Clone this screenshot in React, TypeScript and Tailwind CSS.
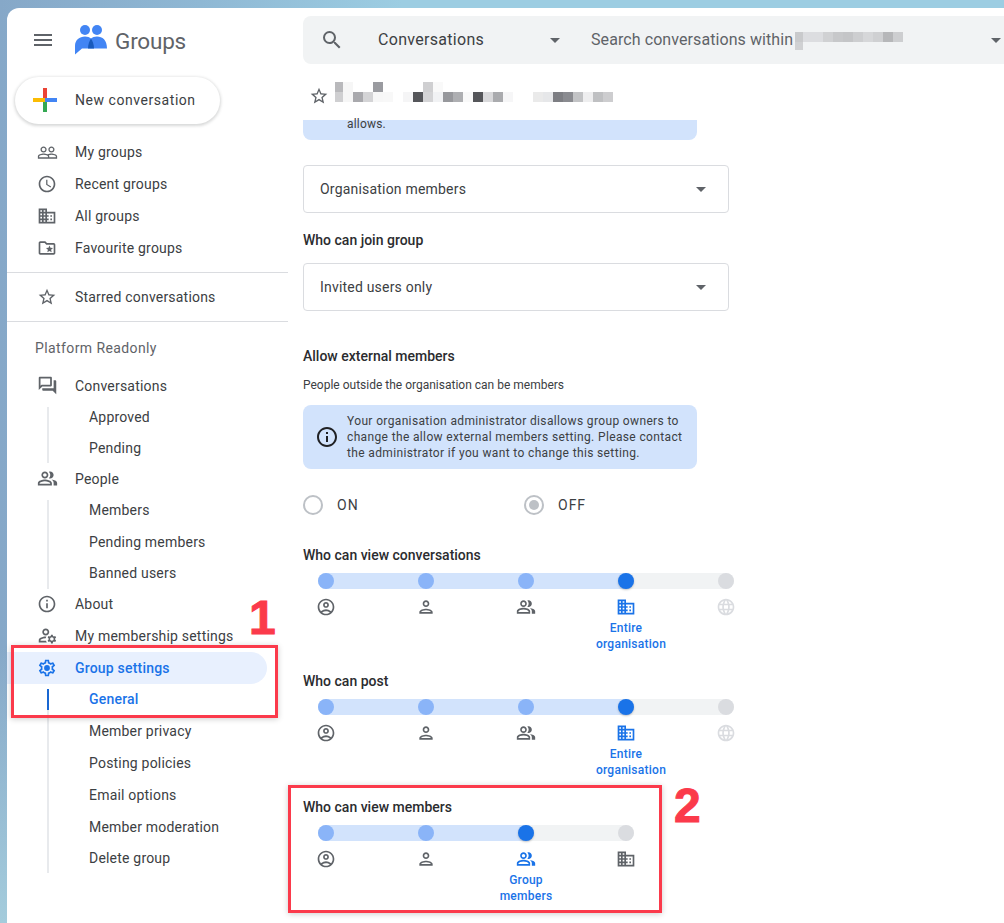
import type { ReactNode } from "react";
import {
  MdAccessTime,
  MdArrowDropDown,
  MdDomain,
  MdInfoOutline,
  MdLanguage,
  MdMenu,
  MdOutlineAccountCircle,
  MdOutlineFolderSpecial,
  MdOutlineForum,
  MdOutlineManageAccounts,
  MdOutlinePeopleAlt,
  MdOutlinePerson,
  MdPeopleOutline,
  MdSearch,
  MdStarBorder,
} from "react-icons/md";

const titleMosaic = [
  [335, 82, 8, "#b9b9bc"], [343, 82, 10, "#f6f6f6"], [373, 82, 10, "#9a9ba0"], [423, 82, 10, "#cfcfd1"], [433, 82, 10, "#f9f9f9"],
  [335, 92, 8, "#cfcfd1"], [343, 92, 10, "#f6f6f6"], [353, 92, 10, "#a9a9ad"], [363, 92, 10, "#d4d4d6"], [373, 92, 10, "#f7f7f7"], [383, 92, 10, "#f8f8f8"],
  [403, 92, 10, "#f5f5f6"], [413, 92, 10, "#55565a"], [423, 92, 10, "#d4d4d6"], [433, 92, 10, "#f1f2f4"], [443, 92, 10, "#97989c"], [453, 92, 10, "#aeafb2"], [463, 92, 10, "#f9f9f9"],
  [473, 92, 10, "#55565a"], [483, 92, 10, "#d9d9db"], [493, 92, 10, "#aaabae"], [503, 92, 10, "#f6f6f7"],
  [533, 92, 10, "#eaeaea"], [543, 92, 10, "#e6e7e9"], [553, 92, 10, "#7d7e83"], [563, 92, 10, "#8a8b90"], [573, 92, 10, "#c2c3c5"], [583, 92, 10, "#eeeeef"], [593, 92, 10, "#bfc0c2"], [603, 92, 10, "#cdcdcf"],
] as const;

const searchMosaic = [
  [795, 32, 8, "#c9cacc"], [803, 32, 10, "#dcdde0"], [813, 32, 10, "#dcdde0"], [823, 32, 10, "#d0d1d3"], [833, 32, 10, "#c7c8ca"], [843, 32, 10, "#c4c5c7"],
  [853, 32, 10, "#cdced0"], [863, 32, 10, "#d6d7d9"], [873, 32, 10, "#cfd0d2"], [883, 32, 10, "#b6b7b9"], [893, 32, 10, "#cdced0"],
  [795, 42, 8, "#d0d1d3"],
] as const;

function GroupsLogo() {
  return (
    <svg width="32" height="30" viewBox="75 26 32 30" className="shrink-0">
      <circle cx="85" cy="31" r="5" fill="#4285f4" />
      <circle cx="97" cy="31" r="5" fill="#4285f4" />
      <path d="M75 55.5V47C75 41 79.5 37.5 85 37.5C87.5 37.5 89.8 38.4 91 39.6C92.2 38.4 94.5 37.5 97 37.5C102.5 37.5 107 41 107 49.5H82Z" fill="#4285f4" />
      <path d="M88 49.5C88 45.5 89.5 42 91 39.6C92.5 42 94 45.5 94 49.5Z" fill="#185abc" />
    </svg>
  );
}

function ColorPlus() {
  return (
    <svg width="24" height="24" viewBox="0 0 24 24" className="shrink-0">
      <rect x="10" y="0" width="4" height="12" fill="#ea4335" />
      <rect x="10" y="12" width="4" height="12" fill="#34a853" />
      <rect x="0" y="10" width="12" height="4" fill="#fbbc04" />
      <rect x="12" y="10" width="12" height="4" fill="#4285f4" />
    </svg>
  );
}

function GearDot() {
  return (
    <svg width="20" height="20" viewBox="0 0 24 24" fill="#1a73e8">
      <path d="M19.43 12.98c.04-.32.07-.64.07-.98 0-.34-.03-.66-.07-.98l2.11-1.65c.19-.15.24-.42.12-.64l-2-3.46c-.09-.16-.26-.25-.44-.25-.06 0-.12.01-.17.03l-2.49 1c-.52-.4-1.08-.73-1.69-.98l-.38-2.65C14.46 2.18 14.25 2 14 2h-4c-.25 0-.46.18-.49.42l-.38 2.65c-.61.25-1.17.59-1.69.98l-2.49-1c-.06-.02-.12-.03-.18-.03-.17 0-.34.09-.43.25l-2 3.46c-.13.22-.07.49.12.64l2.11 1.65c-.04.32-.07.65-.07.98 0 .33.03.66.07.98l-2.11 1.65c-.19.15-.24.42-.12.64l2 3.46c.09.16.26.25.44.25.06 0 .12-.01.17-.03l2.49-1c.52.4 1.08.73 1.69.98l.38 2.65c.03.24.24.42.49.42h4c.25 0 .46-.18.49-.42l.38-2.65c.61-.25 1.17-.59 1.69-.98l2.49 1c.06.02.12.03.18.03.17 0 .34-.09.43-.25l2-3.46c.12-.22.07-.49-.12-.64l-2.11-1.65zm-1.98-1.71c.04.31.05.52.05.73 0 .21-.02.43-.05.73l-.14 1.13.89.7 1.08.84-.7 1.21-1.27-.51-1.04-.42-.9.68c-.43.32-.84.56-1.25.73l-1.06.43-.16 1.13-.2 1.35h-1.4l-.19-1.35-.16-1.13-1.06-.43c-.43-.18-.83-.41-1.23-.71l-.91-.7-1.06.43-1.27.51-.7-1.21 1.08-.84.89-.7-.14-1.13c-.03-.31-.05-.54-.05-.74s.02-.43.05-.73l.14-1.13-.89-.7-1.08-.84.7-1.21 1.27.51 1.04.42.9-.68c.43-.32.84-.56 1.25-.73l1.06-.43.16-1.13.2-1.35h1.39l.19 1.35.16 1.13 1.06.43c.43.18.83.41 1.23.71l.91.7 1.06-.43 1.27-.51.7 1.21-1.07.85-.89.7.14 1.13z" />
      <circle cx="12" cy="12" r="3.5" />
    </svg>
  );
}

function IconBox({ children }: { children: ReactNode }) {
  return <span className="ml-[28px] mr-4 w-6 flex items-center justify-center shrink-0">{children}</span>;
}

function NavRow({ icon, label, h = "h-8" }: { icon: ReactNode; label: string; h?: string }) {
  return (
    <div className={`${h} flex items-center text-sm tracking-[0.2px] text-[#3c4043]`}>
      <span className="text-[#5f6368] flex"><IconBox>{icon}</IconBox></span>
      <span className="whitespace-nowrap">{label}</span>
    </div>
  );
}

function SubList({ items, className }: { items: string[]; className: string }) {
  return (
    <div className="relative pl-[82px]">
      <span className="absolute left-[40px] top-[6px] bottom-0 w-[2px] bg-[#e8eaed]" />
      {items.map((item) => (
        <div key={item} className={`${className} flex items-center text-sm tracking-[0.2px] text-[#3c4043]`}>
          {item}
        </div>
      ))}
    </div>
  );
}

function Select({ label }: { label: string }) {
  return (
    <div className="w-[426px] h-12 border border-[#dadce0] rounded-[4px] pl-4 pr-[15px] flex items-center justify-between text-sm tracking-[0.2px] text-[#3c4043]">
      {label}
      <MdArrowDropDown size={24} className="text-[#5f6368]" />
    </div>
  );
}

type Level = { icon: ReactNode; label?: [string, string]; nudge?: boolean };

function Slider({ title, levels, active }: { title: string; levels: Level[]; active: number }) {
  const filledWidth = active === 3 ? "w-[316px]" : "w-[216px]";
  const rest = levels.length - active - 1;
  return (
    <div>
      <div className="h-5 flex items-center text-sm font-medium text-[#2b2c2f]">{title}</div>
      <div className={`mt-2 ml-[15px] h-4 rounded-full bg-[#f1f3f4] flex ${levels.length === 5 ? "w-[416px]" : "w-[316px]"}`}>
        <div className={`${filledWidth} h-4 rounded-full bg-[#d2e3fc] flex justify-between shrink-0`}>
          {levels.slice(0, active + 1).map((_, i) => (
            <span
              key={i}
              className={i === active ? "size-4 rounded-full bg-[#1a73e8] shadow-[0_1px_2px_rgba(60,64,67,0.3)]" : "size-4 rounded-full bg-[#8ab4f8]"}
            />
          ))}
        </div>
        <div className="flex-1 flex justify-end">
          {rest > 0 && <span className="size-4 rounded-full bg-[#dadce0]" />}
        </div>
      </div>
      <div className="mt-2 ml-[-27px] flex">
        {levels.map((level, i) => (
          <div key={i} className={`w-[100px] flex flex-col items-center ${i === active ? "text-[#1a73e8]" : "text-[#5f6368]"}`}>
            <div className="h-5 flex items-center justify-center">{level.icon}</div>
            <div className="h-8 mt-[3px] text-xs font-medium leading-4 tracking-[0.25px] text-center whitespace-nowrap">
              {i === active && level.label ? (
                <>
                  {level.label[0]}
                  <br />
                  <span className={level.nudge ? "inline-block pl-[10px]" : ""}>{level.label[1]}</span>
                </>
              ) : null}
            </div>
          </div>
        ))}
      </div>
    </div>
  );
}

const orgLevels: Level[] = [
  { icon: <MdOutlineAccountCircle size={20} /> },
  { icon: <MdOutlinePerson size={20} /> },
  { icon: <MdOutlinePeopleAlt size={20} /> },
  { icon: <MdDomain size={20} />, label: ["Entire", "organisation"], nudge: true },
  { icon: <MdLanguage size={20} className="text-[#dadce0]" /> },
];

const memberLevels: Level[] = [
  { icon: <MdOutlineAccountCircle size={20} /> },
  { icon: <MdOutlinePerson size={20} /> },
  { icon: <MdOutlinePeopleAlt size={20} />, label: ["Group", "members"] },
  { icon: <MdDomain size={20} /> },
];

export default function App() {
  return (
    <div className="relative h-[923px] w-[1004px] overflow-hidden pt-2 pl-[7px] bg-[linear-gradient(to_bottom,transparent_70%,#a4ccdc),linear-gradient(to_right,#86a8c8,#8fb8d4_20%,#9ccde2_40%)] font-['Roboto',sans-serif]">
      <div className="h-full bg-white rounded-tl-xl flex">
        {/* sidebar */}
        <aside className="w-[281px] shrink-0">
          <div className="h-16 flex items-center pl-6">
            <MdMenu size={24} className="text-[#5f6368]" />
            <span className="ml-5"><GroupsLogo /></span>
            <span className="ml-2 mt-1 text-[22.5px] tracking-[-0.2px] text-[#5f6368]">Groups</span>
          </div>
          <div className="mt-[5px] ml-2 w-[205px] h-[47px] rounded-full bg-white shadow-[0_1px_3px_1px_rgba(60,64,67,0.2)] flex items-center pl-[18px] pb-px">
            <ColorPlus />
            <span className="ml-[18px] text-sm tracking-[0.55px] text-[#3c4043]">New conversation</span>
          </div>

          <div className="mt-3">
            <NavRow icon={<MdPeopleOutline size={21} />} label="My groups" />
            <NavRow icon={<MdAccessTime size={20} />} label="Recent groups" />
            <NavRow icon={<MdDomain size={20} />} label="All groups" />
            <NavRow icon={<MdOutlineFolderSpecial size={20} />} label="Favourite groups" />
          </div>
          <div className="mt-2 h-px bg-[#dadce0]" />
          <div className="mt-2">
            <NavRow icon={<MdStarBorder size={20} />} label="Starred conversations" />
          </div>
          <div className="mt-2 h-px bg-[#dadce0]" />
          <div className="mt-[10px] h-8 pl-[28px] flex items-center text-sm tracking-[0.4px] text-[#5f6368]">Platform Readonly</div>

          <div className="mt-[6px]">
            <NavRow icon={<MdOutlineForum size={21} />} label="Conversations" h="h-[31px]" />
            <SubList items={["Approved", "Pending"]} className="h-[31px]" />
            <NavRow icon={<MdOutlinePeopleAlt size={21} />} label="People" h="h-[31px]" />
            <SubList items={["Members", "Pending members", "Banned users"]} className="h-[31.7px]" />
            <NavRow icon={<MdInfoOutline size={20} />} label="About" h="h-[30.5px]" />
            <NavRow icon={<MdOutlineManageAccounts size={21} />} label="My membership settings" h="h-[32.4px]" />
            <div className="w-[260px] h-8 rounded-r-full bg-[#e8f0fe] flex items-center">
              <IconBox><GearDot /></IconBox>
              <span className="text-sm font-medium tracking-[0.2px] text-[#1a73e8]">Group settings</span>
            </div>
            <div className="relative pl-[82px]">
              <span className="absolute left-[40px] top-[5px] bottom-0 w-[2px] bg-[#e8eaed]" />
              <span className="absolute left-[40px] top-[5px] w-[2px] h-[21px] bg-[#1967d2]" />
              <div className="h-[31px] flex items-center text-sm font-medium tracking-[0.2px] text-[#1a73e8]">General</div>
              {["Member privacy", "Posting policies", "Email options", "Member moderation"].map((item) => (
                <div key={item} className="h-[31.9px] flex items-center text-sm tracking-[0.2px] text-[#3c4043]">
                  {item}
                </div>
              ))}
              <div className="h-[30.4px] leading-[31px] text-sm tracking-[0.2px] text-[#3c4043]">Delete group</div>
            </div>
          </div>
        </aside>

        {/* main column */}
        <main className="flex-1 min-w-0 ml-[15px]">
          <div className="mt-2 h-12 rounded-l-lg bg-[#f1f3f4] flex items-center text-base text-[#3c4043]">
            <MdSearch size={24} className="ml-[17px] shrink-0 text-[#5f6368]" />
            <span className="ml-[34px] w-[165px] shrink-0 tracking-[0.3px]">Conversations</span>
            <MdArrowDropDown size={24} className="shrink-0 text-[#5f6368]" />
            <span className="ml-[24px] whitespace-nowrap tracking-[0.08px] text-[#5f6368]">Search conversations within</span>
            <svg width="108" height="18" viewBox="795 32 108 18" className="ml-[2px] mt-[2px] shrink-0">
              {searchMosaic.map(([x, y, w, c]) => (
                <rect key={`${x}-${y}`} x={x} y={y} width={w} height={y === 42 ? 8 : 10} fill={c} />
              ))}
            </svg>
            <MdArrowDropDown size={24} className="ml-auto mr-[-4px] shrink-0 text-[#5f6368]" />
          </div>

          <div className="h-14 flex items-start pt-4">
            <MdStarBorder size={20} className="mt-[6px] ml-[6px] shrink-0 text-[#5f6368]" />
            <svg width="278" height="20" viewBox="335 82 278 20" className="ml-[6px] mt-[2px] shrink-0">
              {titleMosaic.map(([x, y, w, c]) => (
                <rect key={`${x}-${y}`} x={x} y={y} width={w} height="10" fill={c} />
              ))}
            </svg>
          </div>

          <div className="w-[394px] h-5 rounded-b-lg bg-[#d2e3fc] pl-11 text-xs leading-[8px] text-[#3c4043] tracking-[0.2px]">allows.</div>

          <div className="mt-[25px]"><Select label="Organisation members" /></div>
          <div className="mt-[17px] h-5 flex items-center text-sm font-medium text-[#2b2c2f]">Who can join group</div>
          <div className="mt-[13px]"><Select label="Invited users only" /></div>

          <div className="mt-[35px] h-5 flex items-center text-sm font-medium text-[#2b2c2f]">Allow external members</div>
          <div className="mt-[11px] h-4 flex items-center text-xs text-[#3c4043]">People outside the organisation can be members</div>

          <div className="mt-3 w-[394px] h-16 rounded-lg bg-[#d2e3fc] flex items-center pl-3 text-xs leading-4 tracking-[0.36px] text-[#3c4043]">
            <MdInfoOutline size={24} className="shrink-0 text-[#202124]" />
            <p className="ml-2 whitespace-nowrap">
              Your organisation administrator disallows group owners to
              <br />
              change the allow external members setting. Please contact
              <br />
              the administrator if you want to change this setting.
            </p>
          </div>

          <div className="mt-[26px] h-5 flex items-center text-sm tracking-[1px] text-[#3c4043]">
            <span className="size-5 rounded-full border-2 border-[#bdc1c6]" />
            <span className="ml-[14px] w-[187px]">ON</span>
            <span className="size-5 rounded-full border-2 border-[#bdc1c6] flex items-center justify-center">
              <span className="size-[10px] rounded-full bg-[#bdc1c6]" />
            </span>
            <span className="ml-[14px]">OFF</span>
          </div>

          <div className="mt-[30px]"><Slider title="Who can view conversations" levels={orgLevels} active={3} /></div>
          <div className="mt-[19px]"><Slider title="Who can post" levels={orgLevels} active={3} /></div>
          <div className="mt-[19px]"><Slider title="Who can view members" levels={memberLevels} active={2} /></div>
        </main>
      </div>

      {/* red annotations over the screenshot */}
      <div className="absolute left-[11px] top-[645px] w-[267px] h-[73px] border-[3px] border-[#fb3a4b] shadow-[0_1px_6px_rgba(0,0,0,0.2)]" />
      <div className="absolute left-[288px] top-[785px] w-[374px] h-[128px] border-[3px] border-[#fb3a4b] shadow-[0_1px_6px_rgba(0,0,0,0.2)]" />
      <span className="absolute left-[249px] top-[591px] text-[48px] leading-[54px] font-bold font-['Liberation_Sans',sans-serif] text-[#fb3a4b] [-webkit-text-stroke:1px_#fb3a4b] [text-shadow:0_0_4px_white,0_0_4px_white,0_0_4px_white]">1</span>
      <span className="absolute left-[674px] top-[779px] text-[48px] leading-[54px] font-bold font-['Liberation_Sans',sans-serif] text-[#fb3a4b] [-webkit-text-stroke:1px_#fb3a4b] [text-shadow:0_0_4px_white,0_0_4px_white,0_0_4px_white]">2</span>
    </div>
  );
}
